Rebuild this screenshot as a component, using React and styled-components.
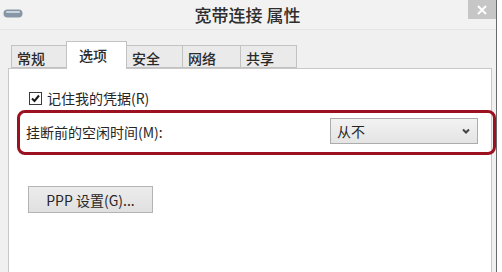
import React from "react";
import styled, { createGlobalStyle } from "styled-components";

const GlobalStyle = createGlobalStyle`
  html, body {
    margin: 0;
    padding: 0;
    background: #ffffff;
  }
  body {
    font-family: "Noto Sans CJK SC", "Noto Sans", sans-serif;
    color: #262626;
  }
`;

const Window = styled.div`
  width: 497px;
  height: 272px;
  overflow: hidden;
  background: #f0f0f0;
  border-right: 1px solid #6a6a6a;
  box-sizing: border-box;
  display: flex;
  flex-direction: column;
`;

const TitleBar = styled.div`
  height: 29px;
  flex-shrink: 0;
  display: flex;
  align-items: flex-start;
  background: #f2f2f2;
  border-bottom: 1px solid #e4e4e4;
`;

const AppIcon = styled.svg`
  margin: 9px 0 0 3px;
  width: 20px;
  height: 9px;
`;

const Title = styled.div`
  flex: 1;
  text-align: center;
  font-size: 17px;
  line-height: 17px;
  font-weight: 500;
  padding-top: 6px;
  padding-left: 4px;
  color: #2e2e2e;
`;

const CloseButton = styled.div`
  width: 28px;
  height: 19px;
  background: #c6c6c6;
  display: flex;
  align-items: center;
  justify-content: center;
`;

const Body = styled.div`
  flex: 1;
  padding: 0 4px 0 8px;
  display: flex;
  flex-direction: column;
`;

const TabStrip = styled.div`
  display: flex;
  align-items: flex-end;
  height: 27px;
  margin-top: 11px;
  padding-left: 4px;
`;

const Tab = styled.div`
  box-sizing: border-box;
  height: ${(p) => (p.$active ? "28px" : "23px")};
  margin-bottom: ${(p) => (p.$active ? "-1px" : "0")};
  width: ${(p) => p.$width}px;
  border: 1px solid #c2c2c2;
  border-bottom: ${(p) => (p.$active ? "none" : "1px solid #c2c2c2")};
  margin-left: -1px;
  background: ${(p) => (p.$active ? "#ffffff" : "#eaeaea")};
  font-size: 14px;
  line-height: 14px;
  font-weight: 500;
  padding: ${(p) => (p.$active ? "6px 0 0 12px" : "5px 0 0 5px")};
  color: #2a2a2a;
  position: relative;
  z-index: ${(p) => (p.$active ? 1 : 0)};
`;

const Panel = styled.div`
  flex: 1;
  background: #ffffff;
  border: 1px solid #c8c8c8;
  border-bottom: none;
  padding-top: 22px;
  display: flex;
  flex-direction: column;
  align-items: flex-start;
`;

const CheckRow = styled.label`
  display: flex;
  align-items: center;
  height: 14px;
  margin-left: 20px;
  font-size: 14px;
  gap: 5px;
`;

const CheckBox = styled.span`
  width: 11px;
  height: 11px;
  border: 1px solid #3a3a3a;
  background: #fff;
  display: flex;
  align-items: center;
  justify-content: center;
`;

const Highlight = styled.div`
  box-sizing: border-box;
  width: 479px;
  height: 45px;
  margin: 5px 0 0 8px;
  border: 3px solid #9c1120;
  border-radius: 8px;
  display: flex;
  align-items: center;
  justify-content: space-between;
  padding: 0 15px 3px 6px;
`;

const FieldLabel = styled.span`
  font-size: 14px;
  padding-top: 2px;
`;

const Select = styled.div`
  box-sizing: border-box;
  width: 148px;
  height: 26px;
  border: 1px solid #acacac;
  background: linear-gradient(#f2f2f2, #e4e4e4);
  display: flex;
  align-items: center;
  justify-content: space-between;
  padding: 0 7px 0 6px;
  font-size: 14px;
`;

const Button = styled.div`
  box-sizing: border-box;
  width: 125px;
  height: 27px;
  margin: 31px 0 0 19px;
  border: 1px solid #b4b4b4;
  background: linear-gradient(#ececec, #e0e0e0);
  display: flex;
  align-items: center;
  justify-content: center;
  font-size: 14px;
`;

const tabs = [
  { label: "常规", width: 56 },
  { label: "选项", width: 61, active: true },
  { label: "安全", width: 57 },
  { label: "网络", width: 59 },
  { label: "共享", width: 57 },
];

export default function App() {
  return (
    <>
      <GlobalStyle />
      <Window>
        <TitleBar>
          <AppIcon viewBox="0 0 20 9">
            <rect x="0.5" y="0.5" width="19" height="8" rx="4" fill="#8796a6" />
            <rect x="3" y="2" width="14" height="2" rx="1" fill="#c9d3dc" />
          </AppIcon>
          <Title>宽带连接 属性</Title>
          <CloseButton>
            <svg width="10" height="10" viewBox="0 0 10 10">
              <path d="M1 1L9 9M9 1L1 9" stroke="#fff" strokeWidth="2" />
            </svg>
          </CloseButton>
        </TitleBar>
        <Body>
          <TabStrip>
            {tabs.map((t) => (
              <Tab key={t.label} $active={t.active} $width={t.width}>
                {t.label}
              </Tab>
            ))}
          </TabStrip>
          <Panel>
            <CheckRow>
              <CheckBox>
                <svg width="9" height="9" viewBox="0 0 9 9">
                  <path d="M1 4.5L3.5 7L8 1.5" stroke="#1a1a1a" strokeWidth="2" fill="none" />
                </svg>
              </CheckBox>
              记住我的凭据(R)
            </CheckRow>
            <Highlight>
              <FieldLabel>挂断前的空闲时间(M):</FieldLabel>
              <Select>
                <span>从不</span>
                <svg width="8" height="6" viewBox="0 0 8 6">
                  <path d="M1 1.5L4 4.5L7 1.5" stroke="#444" strokeWidth="2" fill="none" />
                </svg>
              </Select>
            </Highlight>
            <Button>PPP 设置(G)...</Button>
          </Panel>
        </Body>
      </Window>
    </>
  );
}
